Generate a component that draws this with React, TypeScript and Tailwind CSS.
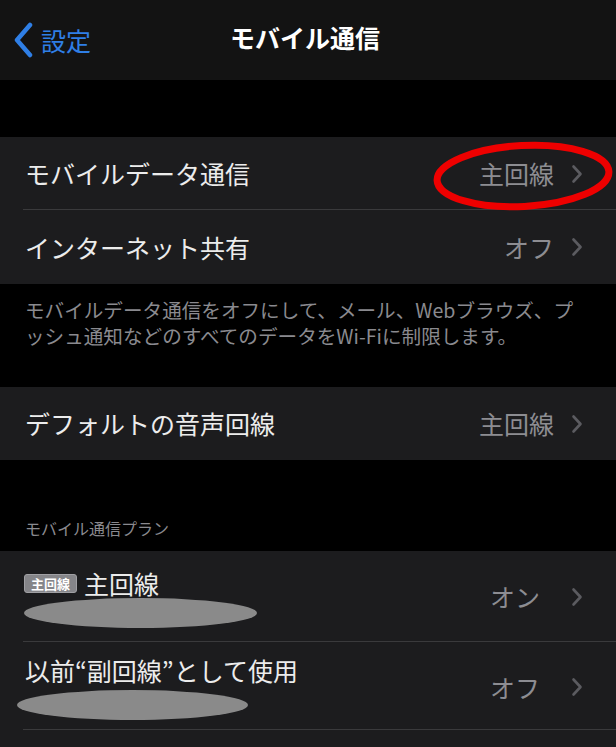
import React from "react";

const font = { fontFamily: '"Noto Sans CJK JP", "Noto Sans", sans-serif' };

function Chevron({ className = "" }: { className?: string }) {
  return (
    <svg width="12" height="20" viewBox="0 0 12 20" className={className}>
      <path d="M2.5 2.5 L9.5 10 L2.5 17.5" fill="none" stroke="#5b5b60" strokeWidth="2.6" strokeLinecap="round" strokeLinejoin="round" />
    </svg>
  );
}

function Row({ label, value, h, sep = false }: { label: string; value: string; h: string; sep?: boolean }) {
  return (
    <div className={`relative flex items-center ${h}`}>
      <div className="flex flex-1 items-center pl-[25px] pr-[33px]">
        <span className="flex-1 text-[25px] leading-none text-[#ececec]">{label}</span>
        <span className="text-[25px] leading-none text-[#8d8d92]">{value}</span>
        <Chevron className="ml-[17px]" />
      </div>
      {sep && <div className="absolute bottom-0 left-[23px] right-0 h-px bg-[#3a3a3c]" />}
    </div>
  );
}

export default function App() {
  return (
    <div className="w-[616px] h-[747px] overflow-hidden bg-black" style={font}>
      {/* Nav */}
      <div className="relative flex h-[80px] items-center bg-[#131313]">
        <div className="flex items-center pl-[13px]">
          <svg width="22" height="36" viewBox="0 0 22 36">
            <path d="M17 3 L4 18 L17 33" fill="none" stroke="#2f7fe6" strokeWidth="4.5" strokeLinecap="round" strokeLinejoin="round" />
          </svg>
          <span className="ml-[6px] text-[25px] leading-none text-[#2f7fe6]">設定</span>
        </div>
        <div className="absolute inset-x-0 top-0 flex h-[80px] items-center justify-center pr-[6px] pb-[6px]">
          <span className="text-[25px] font-bold leading-none text-white">モバイル通信</span>
        </div>
      </div>

      <div className="h-[57px]" />

      {/* Group 1 */}
      <div className="relative bg-[#1c1c1e]">
        <Row label="モバイルデータ通信" value="主回線" h="h-[73px]" sep />
        <Row label="インターネット共有" value="オフ" h="h-[74px]" />
        <svg className="absolute left-[430px] top-[2px]" width="186" height="76" viewBox="0 0 186 76">
          <ellipse cx="93" cy="37" rx="86" ry="30.5" fill="none" stroke="#ee0000" strokeWidth="7" transform="rotate(-3 93 37)" />
        </svg>
      </div>

      {/* Note */}
      <div className="h-[103px] pl-[25px] pt-[13px] text-[19.6px] text-[#8a8a8f]">
        <div className="h-[26px] leading-[26px] whitespace-nowrap">モバイルデータ通信をオフにして、メール、Webブラウズ、プ</div>
        <div className="h-[26px] leading-[26px] whitespace-nowrap">ッシュ通知などのすべてのデータをWi-Fiに制限します。</div>
      </div>

      {/* Group 2 */}
      <div className="bg-[#1c1c1e]">
        <Row label="デフォルトの音声回線" value="主回線" h="h-[73px]" />
      </div>

      {/* Section header */}
      <div className="flex h-[91px] items-end pb-[13px] pl-[25px]">
        <span className="text-[16px] leading-[20px] text-[#8a8a8f]">モバイル通信プラン</span>
      </div>

      {/* Group 3 */}
      <div className="bg-[#1c1c1e]">
        <div className="relative flex h-[91px]">
          <div className="flex flex-1 flex-col pl-[24px] pt-[16px]">
            <div className="flex h-[32px] items-center">
              <span className="flex h-[19px] items-center rounded-[3px] border border-[#a0a0a4] bg-[#858589] px-[6px] text-[13px] font-bold leading-none text-white">主回線</span>
              <span className="ml-[7px] text-[25px] leading-none text-[#ececec]">主回線</span>
            </div>
            <div className="mt-[-1px] h-[30px] w-[233px] rounded-[50%] bg-[#8a8a8a]" />
          </div>
          <div className="flex items-center pr-[33px]">
            <span className="text-[25px] leading-none text-[#8d8d92]">オン</span>
            <Chevron className="ml-[31px]" />
          </div>
          <div className="absolute bottom-0 left-[23px] right-0 h-px bg-[#3a3a3c]" />
        </div>
        <div className="relative flex h-[88px]">
          <div className="flex flex-1 flex-col pl-[25px] pt-[12px]">
            <div className="flex h-[32px] items-center">
              <span className="text-[25px] leading-none text-[#ececec]">以前“副回線”として使用</span>
            </div>
            <div className="ml-[-8px] mt-[4px] h-[30px] w-[231px] rounded-[50%] bg-[#8a8a8a]" />
          </div>
          <div className="flex items-center pr-[33px] pt-[2px]">
            <span className="text-[25px] leading-none text-[#8d8d92]">オフ</span>
            <Chevron className="ml-[31px]" />
          </div>
          <div className="absolute bottom-0 left-[23px] right-0 h-px bg-[#3a3a3c]" />
        </div>
        <div className="h-[40px]" />
      </div>
    </div>
  );
}
